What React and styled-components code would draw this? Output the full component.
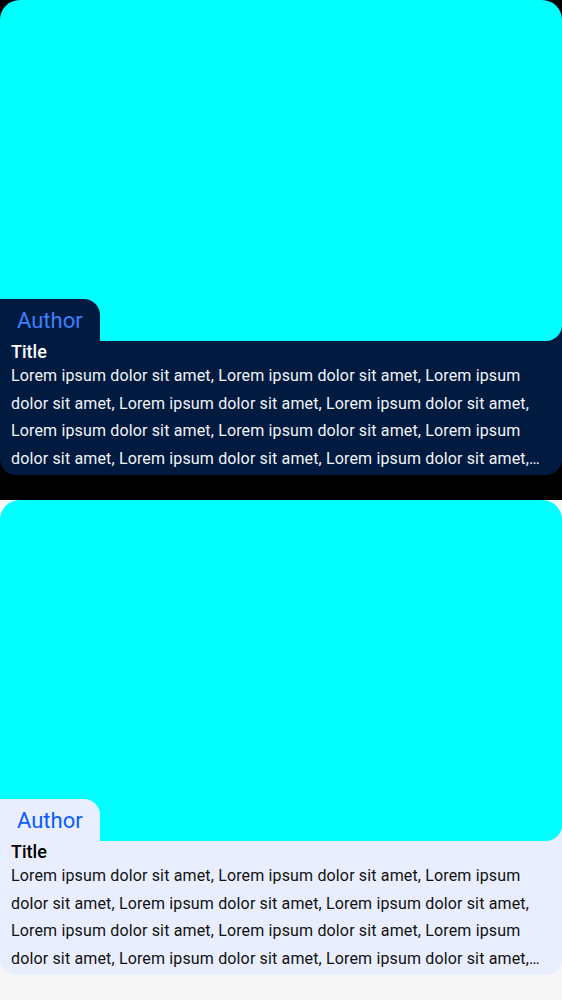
import styled, { createGlobalStyle } from "styled-components";

const GlobalStyle = createGlobalStyle`
    body {
        margin: 0;
        font-family: Roboto, "Noto Sans", sans-serif;
    }
`

const themes = {
    dark: { page: '#000000', card: '#001a40', author: '#3c7fff', text: '#ffffff', body: '#f2f4f8' },
    light: { page: '#f6f6f6', card: '#e8eefd', author: '#0b5cff', text: '#000000', body: '#111111' },
}

const Section = styled.section`
    height: 500px;
    background: ${({ tone }) => themes[tone].page};
`

const Card = styled.article`
    display: flex;
    flex-direction: column;
    background: ${({ tone }) => themes[tone].card};
    border-radius: 20px 20px 16px 16px;
    padding-bottom: 3px;
`

const Cover = styled.div`
    height: 341px;
    background: #00ffff;
    border-radius: 20px 20px 16px 16px;
`

const AuthorTab = styled.div`
    align-self: flex-start;
    margin-top: -42px;
    height: 42px;
    padding: 0 17px;
    display: flex;
    align-items: center;
    background: ${({ tone }) => themes[tone].card};
    border-radius: 0 16px 0 0;
    color: ${({ tone }) => themes[tone].author};
    font-size: 22px;
`

const Title = styled.h3`
    margin: 0;
    padding: 0 11px;
    font-size: 18px;
    font-weight: 500;
    line-height: 21px;
    color: ${({ tone }) => themes[tone].text};
`

const Body = styled.p`
    margin: 0;
    padding: 0 11px;
    font-size: 16px;
    letter-spacing: 0.15px;
    line-height: 27.5px;
    color: ${({ tone }) => themes[tone].body};
    display: -webkit-box;
    -webkit-line-clamp: 4;
    -webkit-box-orient: vertical;
    overflow: hidden;
`

const lorem = Array(12).fill('Lorem ipsum dolor sit amet').join(', ')

const ArticleCard = ({ tone }) => <Section tone={tone}>
    <Card tone={tone}>
        <Cover />
        <AuthorTab tone={tone}>Author</AuthorTab>
        <Title tone={tone}>Title</Title>
        <Body tone={tone}>{lorem}</Body>
    </Card>
</Section>

const App = () => <>
    <GlobalStyle />
    <ArticleCard tone="dark" />
    <ArticleCard tone="light" />
</>

export default App;
